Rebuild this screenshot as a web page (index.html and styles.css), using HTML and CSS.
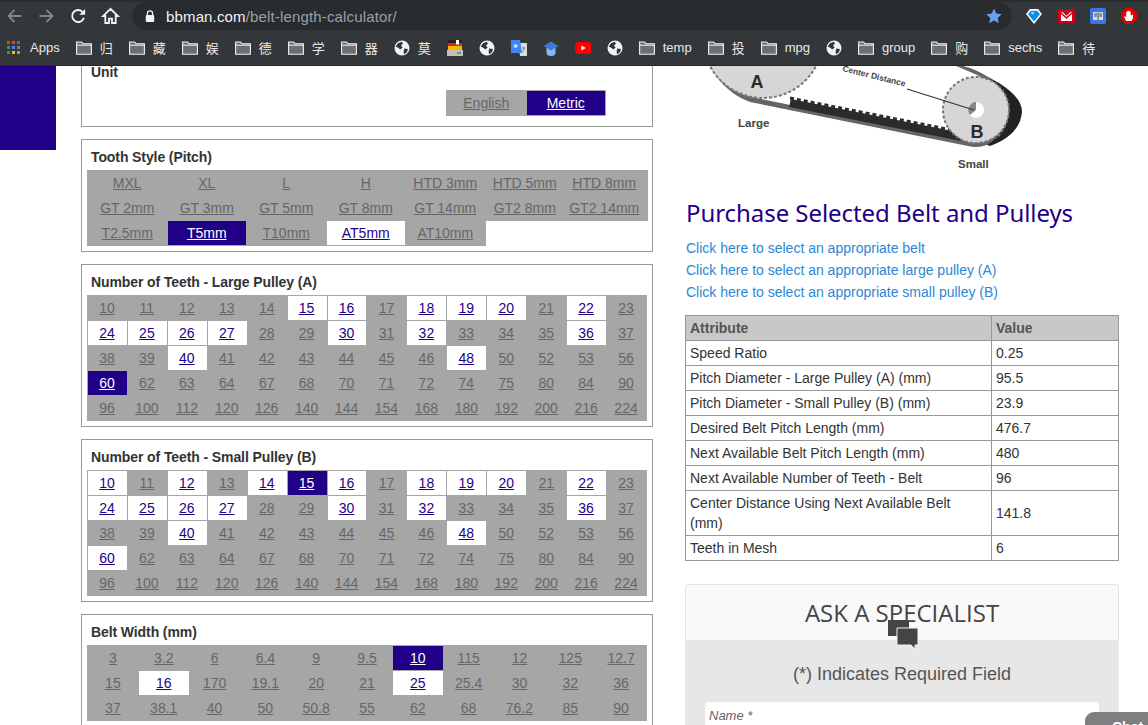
FILE: index.html
```html
<!DOCTYPE html>
<html lang="en">
<head>
    <meta charset="UTF-8">
    <meta name="viewport" content="width=device-width, initial-scale=1.0">
    <title>Belt Length Calculator</title>
    <link rel="stylesheet" href="styles.css">
</head>
<body>

    <svg class="defs" width="0" height="0">
        <symbol id="folder" viewBox="0 0 16 14">
            <path d="M.6 1h5l1.400 1.800h8.400v10.400H.6z" fill="#6b6f72" stroke="#f1f3f4" stroke-width="1.100"/>
            <path d="M.6 4.200h14.800" stroke="#f1f3f4" stroke-width="1"/>
        </symbol>
        <symbol id="globe" viewBox="0 0 16 16">
            <circle cx="8" cy="8" r="7.500" fill="#f1f3f4"/>
            <path d="M4 3.200 7.600 1.800 9 3.400 7 5.400 8.600 7.600 6.400 9.600 3.800 7.600 1.600 6.600zM10.400 8.600l3.600.4-1.200 3.600-2.800 1.600-.4-3z" fill="#33373a"/>
        </symbol>
    </svg>

    <div class="toolbar">
        <svg class="nav" width="16" height="16" viewBox="0 0 16 16"><path d="M15 8H2M8 2 2 8l6 6" fill="none" stroke="#80868b" stroke-width="1.800"/></svg>
        <svg class="nav" width="16" height="16" viewBox="0 0 16 16"><path d="M1 8h13M8 2l6 6-6 6" fill="none" stroke="#80868b" stroke-width="1.800"/></svg>
        <svg class="nav" width="16" height="16" viewBox="0 0 16 16"><path d="M13.400 9.800A6 6 0 1 1 12 3.800" fill="none" stroke="#f1f3f4" stroke-width="1.900"/><path d="M14.600 1v5.800H8.800z" fill="#f1f3f4"/></svg>
        <svg class="nav" width="18" height="18" viewBox="0 0 18 18"><path d="M9 1.800 1.600 9h2.200v7h3.700v-4.400h3V16h3.700V9h2.200z" fill="none" stroke="#f1f3f4" stroke-width="1.800"/></svg>
        <div class="omnibox">
            <svg width="10" height="13" viewBox="0 0 10 13"><path d="M2.400 5V3.400a2.600 2.600 0 0 1 5.200 0V5" fill="none" stroke="#f1f3f4" stroke-width="1.200"/><rect x=".8" y="5" width="8.400" height="7" rx="1" fill="#f1f3f4"/></svg>
            <span class="url"><b>bbman.com</b>/belt-length-calculator/</span>
            <svg class="star" width="16" height="16" viewBox="0 0 16 16"><path d="m8 .6 2.300 5 5.400.6-4 3.700 1.100 5.400L8 12.600l-4.800 2.700 1.100-5.400-4-3.700 5.400-.6z" fill="#6f9dee"/></svg>
        </div>
        <div class="extensions">
            <svg width="18" height="18" viewBox="0 0 18 18"><path d="M5 2h8l4 5-8 10L1 7z" fill="#fff"/><path d="M5.800 3.800h6.400l2.800 3.500-6 7.200-6-7.200z" fill="#0a8fe0"/><path d="M6 5h4L7 8z" fill="#8fdcff"/></svg>
            <svg width="17" height="14" viewBox="0 0 17 14"><rect width="17" height="14" fill="#d0021b"/><path d="M3 3h1.500l4 3.800 4-3.800H14v9H3z" fill="#fff"/><path d="M3 3l5.500 5L14 3v2l-5.500 5L3 5z" fill="#d0021b"/></svg>
            <svg width="16" height="16" viewBox="0 0 16 16"><rect width="16" height="16" rx="2" fill="#3f74e0"/><path d="M3 4h4.500l.5.6.500-.6H13v8H8.600l-.6.500-.6-.5H3z" fill="#d8dde2"/><path d="M8 4.600v7.600" stroke="#3d4c63"/><path d="M4 6h3M4 8h3M9 6h3M9 8h3" stroke="#3d4c63"/></svg>
            <svg width="16" height="16" viewBox="0 0 16 16"><path d="M5 0h6l5 5v6l-5 5H5l-5-5V5z" fill="#e60000"/><path d="M5 13 3 8.600l1-.4 1.200 1.400V4h1v3.400V3h1.200v4V3h1.200v4V3.600h1.100V7.800l1.300-1H12v3.400L10.500 13z" fill="#fff"/></svg>
        </div>
    </div>

    <div class="bookmarks">
        <span class="mark">
            <svg class="apps" width="13" height="13" viewBox="0 0 13 13">
                <path d="M0 0h3v3H0z" fill="#e53935"/><path d="M5 0h3v3H5z" fill="#e53935"/><path d="M10 0h3v3h-3z" fill="#e53935"/>
                <path d="M0 5h3v3H0z" fill="#2e9e4f"/><path d="M5 5h3v3H5z" fill="#4285f4"/><path d="M10 5h3v3h-3z" fill="#4285f4"/>
                <path d="M0 10h3v3H0z" fill="#2e9e4f"/><path d="M5 10h3v3H5z" fill="#fbbc04"/><path d="M10 10h3v3h-3z" fill="#fb8c00"/>
            </svg>Apps</span>
        <span class="mark"><svg class="fold"><use href="#folder"/></svg>归</span>
        <span class="mark"><svg class="fold"><use href="#folder"/></svg>藏</span>
        <span class="mark"><svg class="fold"><use href="#folder"/></svg>娱</span>
        <span class="mark"><svg class="fold"><use href="#folder"/></svg>德</span>
        <span class="mark"><svg class="fold"><use href="#folder"/></svg>学</span>
        <span class="mark"><svg class="fold"><use href="#folder"/></svg>器</span>
        <span class="mark"><svg class="glob"><use href="#globe"/></svg>莫</span>
        <span class="mark">
            <svg width="16" height="16" viewBox="0 0 16 16"><path d="M1 0h14v3H1z" fill="#222"/><path d="M1 3h14v3H1z" fill="#d8261c"/><path d="M1 6h14v4H1z" fill="#f5b800"/><path d="M0 10h16v6H0z" fill="#c9c2ae"/><path d="M9 0h3v5l-1.500-1L9 5z" fill="#fff"/><path d="M10 12h4v2h-4z" fill="#5b8fc7"/></svg>
        </span>
        <span class="mark"><svg class="glob"><use href="#globe"/></svg></span>
        <span class="mark">
            <svg width="16" height="16" viewBox="0 0 16 16"><path d="M7 3h9v13H9z" fill="#d9dcdf"/><path d="M0 0h9l2 13H0z" fill="#4285f4"/><path d="M6.800 5.400H4.500v1.200h1.300a1.400 1.400 0 1 1-.4-1.600" fill="none" stroke="#fff" stroke-width=".9"/><path d="M11 8h3M12.500 7v1M11.500 12l2-4" stroke="#777" stroke-width=".8" fill="none"/></svg>
        </span>
        <span class="mark">
            <svg width="16" height="16" viewBox="0 0 16 16"><path d="M3.500 8h9v4.500a4.500 3.500 0 0 1-9 0z" fill="#8ab4f8"/><path d="M8 1.500 15.500 6 8 10.500.5 6z" fill="#3f78d8"/></svg>
        </span>
        <span class="mark">
            <svg width="16" height="12" viewBox="0 0 16 12"><rect width="16" height="12" rx="3" fill="#f00"/><path d="m6.300 3.400 4.500 2.600-4.500 2.600z" fill="#fff"/></svg>
        </span>
        <span class="mark"><svg class="glob"><use href="#globe"/></svg></span>
        <span class="mark"><svg class="fold"><use href="#folder"/></svg>temp</span>
        <span class="mark"><svg class="fold"><use href="#folder"/></svg>投</span>
        <span class="mark"><svg class="fold"><use href="#folder"/></svg>mpg</span>
        <span class="mark"><svg class="glob"><use href="#globe"/></svg></span>
        <span class="mark"><svg class="fold"><use href="#folder"/></svg>group</span>
        <span class="mark"><svg class="fold"><use href="#folder"/></svg>购</span>
        <span class="mark"><svg class="fold"><use href="#folder"/></svg>sechs</span>
        <span class="mark"><svg class="fold"><use href="#folder"/></svg>待</span>
    </div>

    <div class="page">
        <div class="side-block"></div>

        <div class="calc">
            <div class="panel unit-panel">
                <h4>Unit</h4>
                <div class="opts unit-opts">
                    <a href="#">English</a><a href="#" class="on">Metric</a>
                </div>
            </div>

            <div class="panel">
                <h4>Tooth Style (Pitch)</h4>
                <div class="opts cols-7">
                    <a href="#">MXL</a><a href="#">XL</a><a href="#">L</a><a href="#">H</a><a href="#">HTD 3mm</a><a href="#">HTD 5mm</a><a href="#">HTD 8mm</a>
                    <a href="#">GT 2mm</a><a href="#">GT 3mm</a><a href="#">GT 5mm</a><a href="#">GT 8mm</a><a href="#">GT 14mm</a><a href="#">GT2 8mm</a><a href="#">GT2 14mm</a>
                    <a href="#">T2.5mm</a><a href="#" class="on">T5mm</a><a href="#">T10mm</a><a href="#" class="open">AT5mm</a><a href="#">AT10mm</a>
                </div>
            </div>

            <div class="panel">
                <h4>Number of Teeth - Large Pulley (A)</h4>
                <div class="opts cols-14">
                    <a href="#">10</a><a href="#">11</a><a href="#">12</a><a href="#">13</a><a href="#">14</a><a href="#" class="open">15</a><a href="#" class="open">16</a><a href="#">17</a><a href="#" class="open">18</a><a href="#" class="open">19</a><a href="#" class="open">20</a><a href="#">21</a><a href="#" class="open">22</a><a href="#">23</a>
                    <a href="#" class="open">24</a><a href="#" class="open">25</a><a href="#" class="open">26</a><a href="#" class="open">27</a><a href="#">28</a><a href="#">29</a><a href="#" class="open">30</a><a href="#">31</a><a href="#" class="open">32</a><a href="#">33</a><a href="#">34</a><a href="#">35</a><a href="#" class="open">36</a><a href="#">37</a>
                    <a href="#">38</a><a href="#">39</a><a href="#" class="open">40</a><a href="#">41</a><a href="#">42</a><a href="#">43</a><a href="#">44</a><a href="#">45</a><a href="#">46</a><a href="#" class="open">48</a><a href="#">50</a><a href="#">52</a><a href="#">53</a><a href="#">56</a>
                    <a href="#" class="on">60</a><a href="#">62</a><a href="#">63</a><a href="#">64</a><a href="#">67</a><a href="#">68</a><a href="#">70</a><a href="#">71</a><a href="#">72</a><a href="#">74</a><a href="#">75</a><a href="#">80</a><a href="#">84</a><a href="#">90</a>
                    <a href="#">96</a><a href="#">100</a><a href="#">112</a><a href="#">120</a><a href="#">126</a><a href="#">140</a><a href="#">144</a><a href="#">154</a><a href="#">168</a><a href="#">180</a><a href="#">192</a><a href="#">200</a><a href="#">216</a><a href="#">224</a>
                </div>
            </div>

            <div class="panel">
                <h4>Number of Teeth - Small Pulley (B)</h4>
                <div class="opts cols-14">
                    <a href="#" class="open">10</a><a href="#">11</a><a href="#" class="open">12</a><a href="#">13</a><a href="#" class="open">14</a><a href="#" class="on">15</a><a href="#" class="open">16</a><a href="#">17</a><a href="#" class="open">18</a><a href="#" class="open">19</a><a href="#" class="open">20</a><a href="#">21</a><a href="#" class="open">22</a><a href="#">23</a>
                    <a href="#" class="open">24</a><a href="#" class="open">25</a><a href="#" class="open">26</a><a href="#" class="open">27</a><a href="#">28</a><a href="#">29</a><a href="#" class="open">30</a><a href="#">31</a><a href="#" class="open">32</a><a href="#">33</a><a href="#">34</a><a href="#">35</a><a href="#" class="open">36</a><a href="#">37</a>
                    <a href="#">38</a><a href="#">39</a><a href="#" class="open">40</a><a href="#">41</a><a href="#">42</a><a href="#">43</a><a href="#">44</a><a href="#">45</a><a href="#">46</a><a href="#" class="open">48</a><a href="#">50</a><a href="#">52</a><a href="#">53</a><a href="#">56</a>
                    <a href="#" class="open">60</a><a href="#">62</a><a href="#">63</a><a href="#">64</a><a href="#">67</a><a href="#">68</a><a href="#">70</a><a href="#">71</a><a href="#">72</a><a href="#">74</a><a href="#">75</a><a href="#">80</a><a href="#">84</a><a href="#">90</a>
                    <a href="#">96</a><a href="#">100</a><a href="#">112</a><a href="#">120</a><a href="#">126</a><a href="#">140</a><a href="#">144</a><a href="#">154</a><a href="#">168</a><a href="#">180</a><a href="#">192</a><a href="#">200</a><a href="#">216</a><a href="#">224</a>
                </div>
            </div>

            <div class="panel">
                <h4>Belt Width (mm)</h4>
                <div class="opts cols-11">
                    <a href="#">3</a><a href="#">3.2</a><a href="#">6</a><a href="#">6.4</a><a href="#">9</a><a href="#">9.5</a><a href="#" class="on">10</a><a href="#">115</a><a href="#">12</a><a href="#">125</a><a href="#">12.7</a>
                    <a href="#">15</a><a href="#" class="open">16</a><a href="#">170</a><a href="#">19.1</a><a href="#">20</a><a href="#">21</a><a href="#" class="open">25</a><a href="#">25.4</a><a href="#">30</a><a href="#">32</a><a href="#">36</a>
                    <a href="#">37</a><a href="#">38.1</a><a href="#">40</a><a href="#">50</a><a href="#">50.8</a><a href="#">55</a><a href="#">62</a><a href="#">68</a><a href="#">76.2</a><a href="#">85</a><a href="#">90</a>
                </div>
            </div>
        </div>

        <div class="results">
            <!-- belt diagram, viewBox uses page coordinates -->
            <svg class="diagram" width="433" height="110" viewBox="686 66 433 110">
                <path d="M945 60 Q1022 85 1022 112 Q1020 135 990 146 L975 140 L1005 110 Z" fill="#222"/>
                <path d="M707 60 Q722 92 750 102 L968 146 Q985 150 996 138 Q1014 118 1002 92 Q992 76 970 68 L940 60 Z" fill="#666"/>
                <path d="M711 60 Q726 88 756 98 L968 141 Q985 145 993 134 Q1008 116 998 94 Q988 78 968 71 L942 60 Z" fill="#fff"/>
                <path d="M790 103 L962 137" stroke="#2b2b2b" stroke-width="8" fill="none"/>
                <path d="M790 98 L962 132" stroke="#2b2b2b" stroke-width="3" stroke-dasharray="4 3" fill="none"/>
                <path d="M1003 96 Q1014 118 996 138" stroke="#777" stroke-width="3" stroke-dasharray="3 2" fill="none"/>
                <circle cx="763" cy="38" r="60" fill="#d6d6d6" stroke="#777" stroke-width="2" stroke-dasharray="3 2"/>
                <circle cx="976" cy="110" r="33" fill="#d6d6d6" stroke="#777" stroke-width="2" stroke-dasharray="3 2"/>
                <circle cx="976" cy="110" r="8" fill="#fff"/>
                <path d="M976 102a8 8 0 0 0-6 13l6-5z" fill="#888"/>
                <path d="M907 89 974 110" stroke="#333" stroke-width="1.200"/>
                <text class="pulley-letter" x="757" y="88">A</text>
                <text class="pulley-letter" x="977" y="138">B</text>
                <text class="dim-label" transform="translate(842 71) rotate(14)">Center Distance</text>
                <text class="size-label" x="738" y="127">Large</text>
                <text class="size-label" x="958" y="168">Small</text>
            </svg>

            <h2>Purchase Selected Belt and Pulleys</h2>
            <ul class="buy-links">
                <li><a href="#">Click here to select an appropriate belt</a></li>
                <li><a href="#">Click here to select an appropriate large pulley (A)</a></li>
                <li><a href="#">Click here to select an appropriate small pulley (B)</a></li>
            </ul>

            <table class="attrs">
                <thead>
                    <tr><th>Attribute</th><th>Value</th></tr>
                </thead>
                <tbody>
                    <tr><td>Speed Ratio</td><td>0.25</td></tr>
                    <tr><td>Pitch Diameter - Large Pulley (A) (mm)</td><td>95.5</td></tr>
                    <tr><td>Pitch Diameter - Small Pulley (B) (mm)</td><td>23.9</td></tr>
                    <tr><td>Desired Belt Pitch Length (mm)</td><td>476.7</td></tr>
                    <tr><td>Next Available Belt Pitch Length (mm)</td><td>480</td></tr>
                    <tr><td>Next Available Number of Teeth - Belt</td><td>96</td></tr>
                    <tr><td>Center Distance Using Next Available Belt (mm)</td><td>141.8</td></tr>
                    <tr><td>Teeth in Mesh</td><td>6</td></tr>
                </tbody>
            </table>

            <div class="ask">
                <div class="ask-head">
                    ASK A SPECIALIST
                    <svg class="ask-icon" width="30" height="31" viewBox="0 0 30 31">
                        <path d="M0 0h21v16H0z" fill="#444"/>
                        <path d="M9 8h21v17h-3v4l-4-4H9z" fill="#444" stroke="#f0f0f0" stroke-width="1"/>
                    </svg>
                </div>
                <div class="ask-body">
                    <p>(*) Indicates Required Field</p>
                    <div class="ask-input">Name *</div>
                </div>
            </div>
        </div>
    </div>

    <div class="chat-tab">Chat</div>

</body>
</html>
```

FILE: styles.css
```css
html, body {
    margin: 0;
    padding: 0;
    height: 725px;
    overflow: hidden;
    background-color: #fff;
    font-family: "Liberation Sans", Arial, sans-serif;
}
.defs {
    position: absolute;
}

/* browser chrome */
.toolbar {
    height: 33px;
    box-sizing: border-box;
    padding: 0 0 3px 2px;
    display: flex;
    align-items: center;
    background-color: #33373a;
    border-top: 2px solid #2a2d30;
}
.nav {
    margin: 0 7px 0 0;
    flex: none;
    width: 25px;
}
.omnibox {
    margin-left: 2px;
    width: 880px;
    height: 28px;
    box-sizing: border-box;
    padding: 0 10px 0 13px;
    display: flex;
    align-items: center;
    background-color: #282c2f;
    border-radius: 14px;
}
.url {
    margin-left: 11px;
    font-size: 15px;
    letter-spacing: 0.15px;
    color: #9aa0a6;
}
.url b {
    font-weight: normal;
    color: #f1f3f4;
}
.star {
    margin-left: auto;
    margin-right: 0;
}
.extensions {
    margin-left: 13px;
    display: flex;
    align-items: center;
    gap: 15px;
}
.bookmarks {
    height: 33px;
    box-sizing: border-box;
    padding: 0 0 3px 7px;
    display: flex;
    align-items: center;
    gap: 16px;
    background-color: #33373a;
    border-bottom: 1px solid #24272a;
    font-family: "Liberation Sans", "Noto Sans CJK SC", sans-serif;
    font-size: 13px;
    color: #e8eaed;
}
.mark {
    display: flex;
    align-items: center;
    gap: 8px;
}
.mark svg {
    flex: none;
}
.apps {
    margin-right: 2px;
}
.fold {
    width: 16px;
    height: 14px;
}
.glob {
    width: 16px;
    height: 16px;
}

/* page */
.page {
    height: 659px;
    overflow: hidden;
    display: flex;
    align-items: flex-start;
    color: #333;
}
.side-block {
    flex: none;
    width: 56px;
    height: 84px;
    margin-right: 25px;
    background-color: #1f0087;
}
.calc {
    flex: none;
    width: 572px;
    margin-top: -12px;
    margin-right: 33px;
}
.panel {
    box-sizing: border-box;
    margin-bottom: 12px;
    padding: 0 5px 5px;
    border: 1px solid #999;
}
.panel h4 {
    margin: 0;
    padding-left: 4px;
    height: 30px;
    line-height: 34px;
    font-size: 14px;
    letter-spacing: -0.1px;
    font-weight: bold;
    color: #333;
}
.unit-panel {
    height: 73px;
}
.opts {
    display: grid;
    gap: 1px;
    margin: 1px;
    grid-auto-rows: 24px;
}
.opts a {
    display: block;
    line-height: 24px;
    text-align: center;
    font-size: 14px;
    white-space: nowrap;
    color: #666;
    background-color: #a6a6a6;
    box-shadow: 0 0 0 1px #a6a6a6;
}
.opts a.open {
    color: #1f0087;
    background-color: #fff;
}
.opts a.on {
    color: #fff;
    background-color: #1f0087;
}
.cols-7 {
    grid-template-columns: repeat(7, 78.5px);
}
/* full rows run a little short of the panel, the grey carries on */
.cols-7 a:nth-child(7n) {
    box-shadow: 0 0 0 1px #a6a6a6, 3px 0 0 1px #a6a6a6;
}
.cols-11 {
    grid-template-columns: repeat(11, 1fr);
}
.cols-14 {
    grid-template-columns: repeat(14, 1fr);
}
.cols-14 a {
    padding-right: 1px;
}
.unit-opts {
    width: 158px;
    grid-template-columns: repeat(2, 1fr);
    margin: 6px 42px 0 auto;
}

/* right column */
.results {
    flex: none;
    width: 433px;
}
.diagram {
    display: block;
}
.pulley-letter {
    font-family: "Liberation Sans", Arial, sans-serif;
    font-size: 18px;
    font-weight: bold;
    text-anchor: middle;
    fill: #2b2b2b;
}
.dim-label {
    font-family: "Liberation Sans", Arial, sans-serif;
    font-size: 8.500px;
    font-weight: bold;
    fill: #444;
}
.size-label {
    font-family: "Liberation Sans", Arial, sans-serif;
    font-size: 11.500px;
    font-weight: bold;
    fill: #444;
}
.results h2 {
    margin: 20px 0 7px;
    font-family: "Noto Sans", sans-serif;
    font-size: 24px;
    letter-spacing: -0.06px;
    line-height: 34px;
    font-weight: normal;
    color: #1f0087;
}
.buy-links {
    margin: 0 0 12px;
    padding: 0;
    list-style: none;
    font-size: 14px;
    line-height: 22px;
}
.buy-links a {
    color: #2d87d3;
    text-decoration: none;
}
.attrs {
    width: 434px;
    margin-left: -1px;
    border-collapse: collapse;
    table-layout: fixed;
    font-size: 14px;
    line-height: 20px;
}
.attrs th, .attrs td {
    padding: 2px 3px 2px 4px;
    border: 1px solid #999;
    text-align: left;
}
.attrs th:first-child {
    width: 298px;
}
.attrs td:first-child {
    padding-right: 10px;
}
.attrs th {
    background-color: #c8c8c8;
    color: #555;
}
.ask {
    width: 434px;
    margin: 23px 0 0 -1px;
}
.ask-head {
    position: relative;
    height: 57px;
    box-sizing: border-box;
    border: 1px solid #e4e4e4;
    border-radius: 3px 3px 0 0;
    background-color: #f9f9f9;
    text-align: center;
    font-family: "Open Sans", sans-serif;
    font-size: 24px;
    line-height: 56px;
    color: #444;
}
.ask-icon {
    position: absolute;
    left: 202px;
    top: 35px;
}
.ask-body {
    padding: 20px 20px 40px;
    background-color: #e7e7e7;
    text-align: center;
    color: #555;
}
.ask-body p {
    margin: 0 0 15px;
    font-size: 18px;
    line-height: 26px;
}
.ask-input {
    height: 34px;
    padding: 6px 4px;
    box-sizing: border-box;
    border-radius: 3px;
    background-color: #fff;
    text-align: left;
    font-size: 13px;
    font-style: italic;
    color: #666;
}
.chat-tab {
    position: absolute;
    right: 0;
    top: 712px;
    width: 63px;
    height: 30px;
    box-sizing: border-box;
    padding: 7px 0 0 27px;
    border-radius: 9px 0 0 0;
    background-color: #7f7f7f;
    font-size: 14px;
    font-weight: bold;
    color: #fff;
}
```
